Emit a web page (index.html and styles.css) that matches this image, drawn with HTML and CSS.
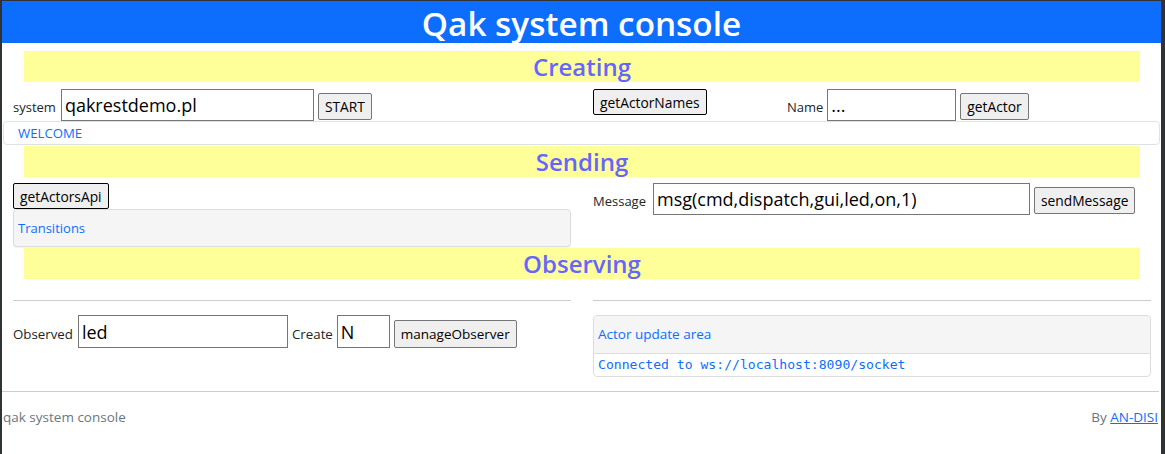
FILE: index.html
```html
<!DOCTYPE html>
<html lang="en">
<head>
<meta charset="utf-8">
<title>Qak system console</title>
<link rel="stylesheet" href="styles.css">
</head>
<body>
<div class="window">
  <header class="top"><h1 class="title">Qak system console</h1></header>

  <h2 class="band">Creating</h2>
  <div class="row row-create">
    <div class="col col-half inline">
      <label class="lbl">system</label>
      <input class="inp inp-system" type="text" value="qakrestdemo.pl">
      <button class="btn">START</button>
    </div>
    <div class="col col-names">
      <button class="btn btn-focus">getActorNames</button>
    </div>
    <div class="col inline">
      <label class="lbl">Name</label>
      <input class="inp inp-name" type="text" value="...">
      <button class="btn">getActor</button>
    </div>
  </div>
  <div class="welcome">WELCOME</div>

  <h2 class="band band-send">Sending</h2>
  <div class="row row-send">
    <div class="col col-half pad-left">
      <button class="btn btn-focus btn-api">getActorsApi</button>
      <div class="panel-head transitions">Transitions</div>
    </div>
    <div class="col inline">
      <label class="lbl lbl-msg">Message</label>
      <input class="inp inp-msg" type="text" value="msg(cmd,dispatch,gui,led,on,1)">
      <button class="btn">sendMessage</button>
    </div>
  </div>

  <h2 class="band band-obs">Observing</h2>
  <div class="row row-obs">
    <div class="col col-half pad-left">
      <hr class="rule">
      <div class="inline obs-line">
        <label class="lbl lbl-lg">Observed</label>
        <input class="inp inp-obs" type="text" value="led">
        <label class="lbl lbl-lg">Create</label>
        <input class="inp inp-create" type="text" value="N">
        <button class="btn btn-lg">manageObserver</button>
      </div>
    </div>
    <div class="col col-right">
      <hr class="rule">
      <div class="panel">
        <div class="panel-head">Actor update area</div>
        <div class="panel-body">Connected to ws://localhost:8090/socket</div>
      </div>
    </div>
  </div>

  <footer class="foot">
    <span class="foot-left">qak system console</span>
    <span class="foot-right">By <a href="#" class="link">AN-DISI</a></span>
  </footer>
</div>
</body>
</html>
```
FILE: styles.css
```css
html, body {
  margin: 0;
  padding: 0;
}
body {
  background: #2f3336;
  height: 454px;
  overflow: hidden;
  font-family: "Open Sans", "Noto Sans", sans-serif;
  color: #212529;
}
.window {
  width: 1159px;
  height: 453px;
  margin: 1px 0 0 2px;
  background: #fff;
  overflow: hidden;
}
.top {
  background: #0d6efd;
  height: 42px;
}
.title {
  margin: 0;
  text-align: center;
  color: #fff;
  font-size: 33.3px;
  font-weight: 600;
  line-height: 44px;
}
.band {
  margin: 8px 21px 0 22px;
  height: 31px;
  background: #ffff99;
  color: #6666ff;
  font-size: 24px;
  font-weight: 600;
  line-height: 32px;
  text-align: center;
}
.band-send { margin-top: 1px; }
.band-obs { margin-top: 1px; }
.row {
  display: flex;
  align-items: flex-start;
}
.col { box-sizing: border-box; }
.col-half {
  width: 591px;
  padding-left: 11px;
}
.inline {
  display: flex;
  align-items: baseline;
  gap: 4px;
}
.pad-left { padding-left: 11px; }
.row-create { margin-top: 7px; height: 32px; }
.col-names { width: 194px; }
.lbl {
  font-size: 13px;
}
.lbl-msg { margin-right: 3px; }
.lbl-lg { font-size: 13.3px; }
.inp {
  box-sizing: border-box;
  height: 32px;
  border: 1px solid #767676;
  border-radius: 0;
  padding: 0 3px;
  font-family: "Open Sans", "Noto Sans", sans-serif;
  font-size: 18px;
  color: #000;
  background: #fff;
  outline: none;
}
.inp-system { width: 253px; margin-left: 1px; }
.inp-name { width: 129px; }
.inp-msg { width: 377px; }
.inp-obs { width: 210px; height: 33px; margin-left: 1px; }
.inp-create { width: 53px; height: 33px; }
.btn {
  box-sizing: border-box;
  height: 27px;
  padding: 0 6px;
  border: 1px solid #767676;
  border-radius: 2px;
  background: #efefef;
  font-family: "Open Sans", "Noto Sans", sans-serif;
  font-size: 13.8px;
  color: #000;
}
.btn-focus { border-color: #000; height: 26px; }
.btn-api { display: block; }
.btn-lg { height: 28px; font-size: 13.5px; }
.welcome {
  box-sizing: border-box;
  margin: 0 1px;
  height: 24px;
  border: 1px solid #dee2e6;
  border-radius: 4px;
  padding-left: 14px;
  color: #0d6efd;
  font-size: 13.2px;
  line-height: 22px;
}
.row-send { margin-top: 6px; }
.transitions {
  box-sizing: border-box;
  width: 558px;
  height: 38px;
  border: 1px solid #dddddd;
  border-radius: 4px;
  box-shadow: 0 1px 1px rgba(0,0,0,0.06);
}
.panel-head {
  background: #f5f5f5;
  color: #0d6efd;
  font-size: 13px;
  padding-left: 4px;
  line-height: 36px;
}
.col-right {
  width: 558px;
}
.rule {
  margin: 21px 0 14px 0;
  border: 0;
  border-top: 1px solid #cccccc;
  height: 0;
}
.col-half .rule { width: 558px; }
.obs-line { gap: 4px; }
.panel {
  box-sizing: border-box;
  height: 62px;
  border: 1px solid #dddddd;
  border-radius: 4px;
  overflow: hidden;
}
.panel .panel-head {
  height: 37px;
  border-bottom: 1px solid #dddddd;
  font-size: 13.5px;
}
.panel-body {
  padding-left: 4px;
  font-family: "DejaVu Sans Mono", "Liberation Mono", monospace;
  font-size: 13.1px;
  color: #0d6efd;
  line-height: 22px;
}
.foot {
  margin-top: 14px;
  border-top: 1px solid #cccccc;
  width: 1157px;
  display: flex;
  justify-content: space-between;
  padding-top: 16px;
  font-size: 13.5px;
  color: #6c757d;
  white-space: nowrap;
}
.foot-left { padding-left: 1px; }
.foot-right { margin-right: 1px; }
.link { color: #0d6efd; }
```
